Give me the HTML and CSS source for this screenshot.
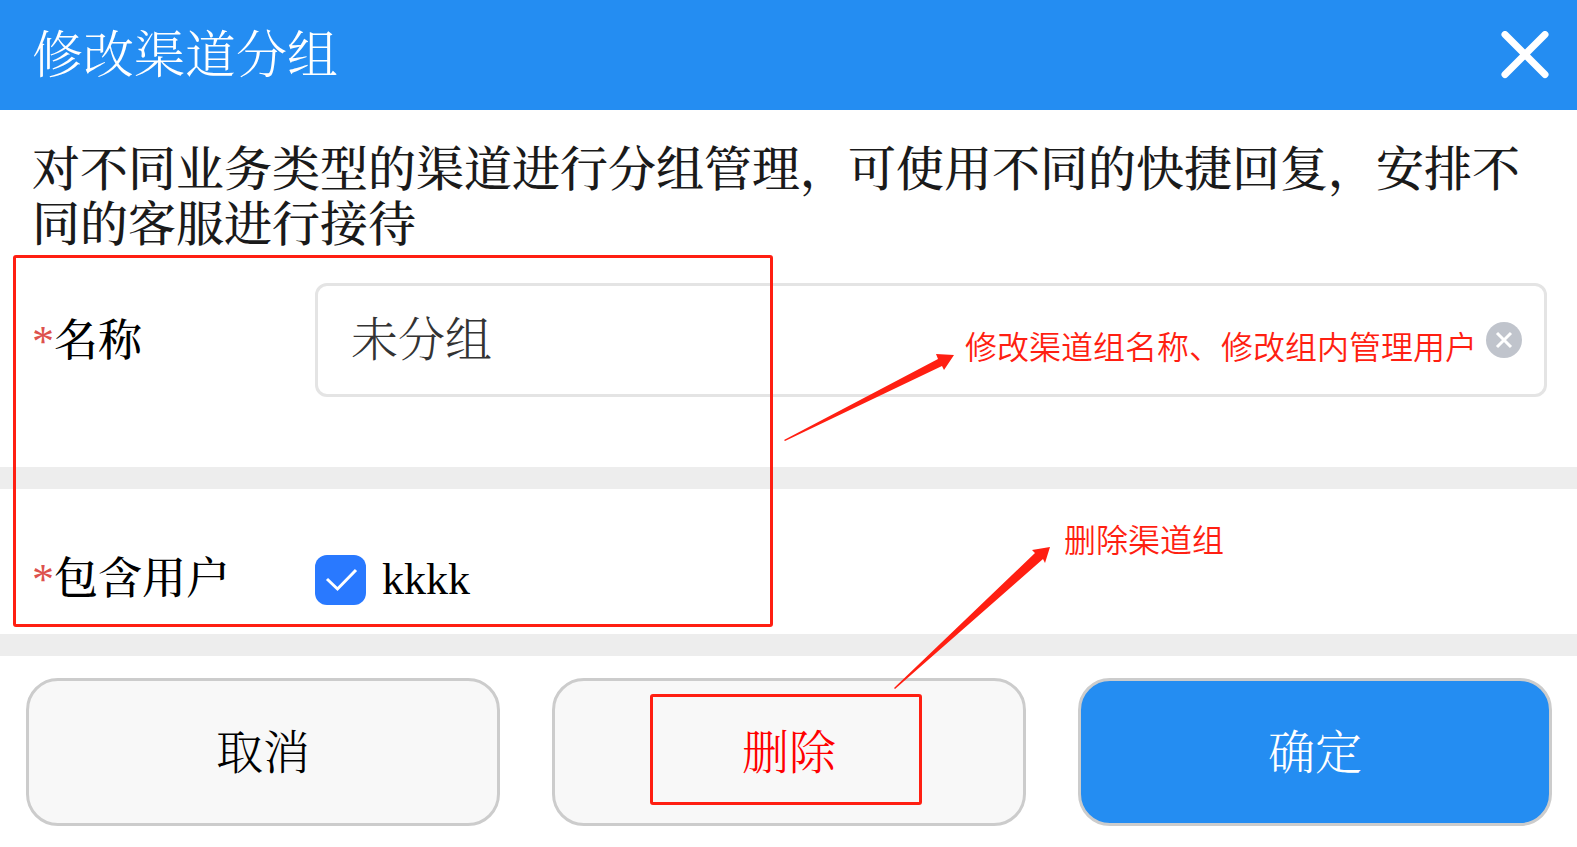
FILE: index.html
```html
<!DOCTYPE html>
<html lang="zh-CN">
<head>
<meta charset="utf-8">
<meta name="viewport" content="width=device-width, initial-scale=1">
<title>修改渠道分组</title>
<link rel="stylesheet" href="styles.css">
</head>
<body>
<main class="dialog">
  <header class="dialog-header">
    <h1 class="dialog-title">修改渠道分组</h1>
    <button class="close" type="button" aria-label="关闭">
      <svg viewBox="0 0 48 48" width="48" height="48" aria-hidden="true"><path d="M4 3.500L44 43.500M44 3.500L4 43.500" stroke="#fff" stroke-width="7" stroke-linecap="round"/></svg>
    </button>
  </header>
  <form class="dialog-form">
    <p class="intro">对不同业务类型的渠道进行分组管理，可使用不同的快捷回复，安排不同的客服进行接待</p>
    <div class="row row-name">
      <label class="label" for="group-name"><span class="required">*</span>名称</label>
      <div class="field">
        <input class="field-input" id="group-name" type="text" value="未分组">
        <button class="clear" type="button" aria-label="清除">
          <svg viewBox="0 0 36 36" width="36" height="36" aria-hidden="true"><circle cx="18" cy="18" r="18" fill="#c0c4cc"/><path d="M11 11L25 25M25 11L11 25" stroke="#fff" stroke-width="3"/></svg>
        </button>
      </div>
    </div>
    <div class="row row-users">
      <span class="label" id="users-label"><span class="required">*</span>包含用户</span>
      <label class="check" aria-describedby="users-label">
        <span class="check-mark">
          <input class="check-input" type="checkbox" checked>
          <svg class="check-tick" viewBox="0 0 51 50" aria-hidden="true"><path d="M12 24L22.500 34L41 15" fill="none" stroke="#fff" stroke-width="3"/></svg>
        </span>
        kkkk
      </label>
    </div>
    <footer class="actions">
      <button class="btn" type="button">取消</button>
      <button class="btn btn-delete" type="button">删除<span class="mark mark-delete"></span></button>
      <button class="btn btn-primary" type="submit">确定</button>
    </footer>
  </form>
  <div class="mark mark-fields"></div>
  <svg class="arrows" aria-hidden="true">
    <path d="M784 440L938 359L936 354L954 355L944 370L942 366L785 441Z"/>
    <path d="M894 688L1035 553L1032 550L1050 547L1045 563L1043 559L895 689Z"/>
  </svg>
  <p class="note note-edit">修改渠道组名称、修改组内管理用户</p>
  <p class="note note-delete">删除渠道组</p>
</main>
</body>
</html>
```

FILE: styles.css
```css
* {
  box-sizing: border-box;
}

body {
  margin: 0;
  background: #fff;
  color: #000;
  font-family: "Liberation Serif", "Noto Serif CJK SC", "Noto Sans CJK SC", serif;
  font-weight: 300;
}

button,
input {
  font: inherit;
  color: inherit;
}

.dialog {
  position: relative;
  overflow: hidden;
}

.dialog-header {
  display: flex;
  align-items: center;
  justify-content: space-between;
  height: 110px;
  padding: 0 28px 0 32px;
  background: #248df2;
  color: #fff;
}

.dialog-title {
  margin: 0;
  padding-top: 2px;
  font-size: 51px;
  font-weight: 300;
  line-height: 72px;
}

.close,
.clear {
  flex: none;
  padding: 0;
  border: 0;
  background: none;
}

.close svg,
.clear svg {
  display: block;
}

.intro {
  margin: 0;
  padding: 32px 32px 0;
  color: #1a1a1a;
  font-size: 48px;
  font-weight: 500;
  line-height: 55px;
}

.row {
  display: grid;
  grid-template-columns: 283px 1fr;
  align-items: center;
  border-bottom: 22px solid #ededed;
  font-size: 44px;
  font-weight: 500;
  line-height: 50px;
}

.row-name {
  padding: 31px 30px 70px 32px;
}

.row-users {
  padding: 66px 30px 29px 32px;
}

.label {
  line-height: 50px;
}

.row-name .label {
  padding-top: 4px;
}

.required {
  color: #dd524d;
}

.field {
  display: flex;
  align-items: center;
  height: 114px;
  padding: 0 22px 0 33px;
  border: 3px solid #e4e4e4;
  border-radius: 12px;
}

.field-input {
  flex: 1;
  min-width: 0;
  padding: 0;
  border: 0;
  outline: 0;
  background: none;
  color: #333;
  font-size: 47px;
  font-weight: 300;
}

.check {
  display: flex;
  align-items: center;
  gap: 16px;
}

.check-mark {
  display: grid;
  width: 51px;
  height: 50px;
}

.check-input,
.check-tick {
  grid-area: 1 / 1;
  width: 100%;
  height: 100%;
  margin: 0;
}

.check-input {
  appearance: none;
  border-radius: 12px;
  background: #2979ff;
}

.check-tick {
  visibility: hidden;
  pointer-events: none;
}

.check-input:checked + .check-tick {
  visibility: visible;
}

.actions {
  display: flex;
  gap: 52px;
  padding: 22px 25px 21px 26px;
}

.btn {
  position: relative;
  flex: 1;
  height: 148px;
  padding: 0 0 8px;
  border: 3px solid #ccc;
  border-radius: 32px;
  background: #f8f8f8;
  font-size: 47px;
}

.btn-delete {
  color: #f00;
}

.btn-primary {
  background: #248df2;
  color: #fff;
}

.mark {
  position: absolute;
  border: 3px solid #ff1f12;
  border-radius: 3px;
  pointer-events: none;
}

.mark-fields {
  top: 255px;
  left: 13px;
  width: 760px;
  height: 372px;
}

.mark-delete {
  inset: 13px 101px 18px 95px;
}

.arrows {
  position: absolute;
  top: 0;
  left: 0;
  width: 100%;
  height: 100%;
  fill: #ff1f12;
  pointer-events: none;
}

.note {
  position: absolute;
  margin: 0;
  color: #ff1f12;
  font-family: "Noto Sans CJK SC", sans-serif;
  font-size: 32px;
  font-weight: 350;
  line-height: 48px;
  white-space: nowrap;
}

.note-edit {
  top: 321px;
  left: 965px;
}

.note-delete {
  top: 514px;
  left: 1064px;
}
```
